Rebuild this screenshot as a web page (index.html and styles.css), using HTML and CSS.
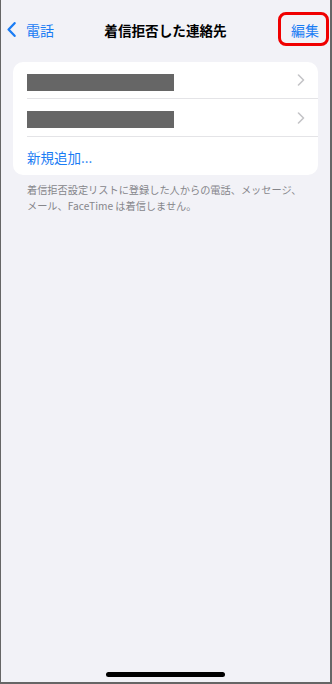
FILE: index.html
```html
<!DOCTYPE html>
<html lang="ja">
<head>
<meta charset="utf-8">
<title>着信拒否した連絡先</title>
<link rel="stylesheet" href="styles.css">
</head>
<body>
<div class="screen">
  <header class="nav">
    <div class="nav-left">
      <svg class="back-icon" width="9" height="15" viewBox="0 0 9 15"><path d="M7.6 1.2 L1.6 7.5 L7.6 13.8" fill="none" stroke="#1a7cf4" stroke-width="2.3" stroke-linecap="round" stroke-linejoin="round"/></svg>
      <span class="nav-link">電話</span>
    </div>
    <div class="nav-title">着信拒否した連絡先</div>
    <div class="nav-right">
      <span class="edit-btn">編集</span>
    </div>
  </header>
  <section class="card">
    <div class="row">
      <div class="redacted"></div>
      <svg class="chev" width="8" height="12" viewBox="0 0 8 12"><path d="M1.5 1 L6.5 6 L1.5 11" fill="none" stroke="#c4c4c7" stroke-width="1.6" stroke-linecap="round" stroke-linejoin="round"/></svg>
    </div>
    <div class="row">
      <div class="redacted"></div>
      <svg class="chev" width="8" height="12" viewBox="0 0 8 12"><path d="M1.5 1 L6.5 6 L1.5 11" fill="none" stroke="#c4c4c7" stroke-width="1.6" stroke-linecap="round" stroke-linejoin="round"/></svg>
    </div>
    <div class="row row-add">
      <span class="add-link">新規追加...</span>
    </div>
  </section>
  <p class="footnote">着信拒否設定リストに登録した人からの電話、メッセージ、メール、FaceTime は着信しません。</p>
  <div class="home-indicator"></div>
</div>
</body>
</html>
```
FILE: styles.css
```css
* { box-sizing: border-box; }
html, body { margin: 0; padding: 0; }
body {
  font-family: "Noto Sans CJK JP", "Noto Sans", sans-serif;
  background: #f2f2f7;
}
.screen {
  width: 332px;
  height: 684px;
  display: flex;
  flex-direction: column;
  background: #f2f2f7;
  border-left: 1px solid #666;
  border-right: 2px solid #666;
  border-bottom: 2px solid #666;
}
.nav {
  height: 58px;
  display: grid;
  grid-template-columns: 1fr auto 1fr;
  align-items: center;
  padding-top: 1px;
}
.nav-left {
  display: flex;
  align-items: center;
  padding-left: 6px;
}
.back-icon { display: block; }
.nav-link {
  margin-left: 10px;
  font-size: 14px;
  color: #1a7cf4;
  line-height: 20px;
}
.nav-title {
  font-size: 13.6px;
  font-weight: 700;
  color: #000;
  line-height: 20px;
}
.nav-right {
  display: flex;
  justify-content: flex-end;
}
.edit-btn {
  width: 51px;
  height: 34px;
  border: 3px solid #f00000;
  border-radius: 8px;
  display: flex;
  align-items: center;
  justify-content: center;
  padding-left: 3px;
  padding-top: 1px;
  font-size: 14px;
  color: #1a7cf4;
  margin-right: 1px;
  margin-top: -1px;
}
.card {
  margin: 4px 12px 0 12px;
  background: #fff;
  border-radius: 10px;
  overflow: hidden;
}
.row {
  height: 38px;
  margin-left: 14px;
  padding-right: 13px;
  display: flex;
  align-items: center;
  justify-content: space-between;
  border-bottom: 1px solid #e4e4e7;
}
.row:first-child { height: 37px; }
.row:first-child .redacted { margin-top: 4px; }
.row .redacted { margin-top: 3px; }
.redacted {
  width: 147px;
  height: 17px;
  background: #666;
}
.chev { display: block; }
.row-add {
  border-bottom: none;
  height: 38px;
}
.add-link {
  font-size: 13.5px;
  color: #1a7cf4;
  line-height: 20px;
  margin-top: 2px;
}
.footnote {
  margin: 7px 24px 0 26px;
  font-size: 10.2px;
  line-height: 15.5px;
  color: #86868b;
}
.home-indicator {
  margin: auto auto 5px auto;
  width: 119px;
  height: 5px;
  border-radius: 3px;
  background: #000;
}
```
